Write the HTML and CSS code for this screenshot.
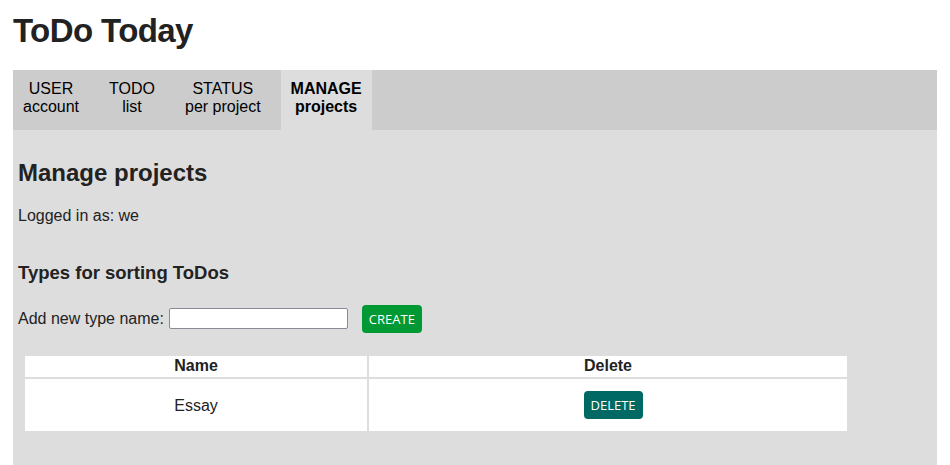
FILE: index.html
```html
<!DOCTYPE html>
<html lang="en">
<head>
<meta charset="utf-8">
<title>ToDo Today</title>
<link rel="stylesheet" href="styles.css">
</head>
<body>
<h1 class="site-title">ToDo Today</h1>
<nav class="tabs">
  <a class="tab" href="#">USER<br>account</a>
  <a class="tab" href="#">TODO<br>list</a>
  <a class="tab" href="#">STATUS<br>per project</a>
  <a class="tab tab-active" href="#">MANAGE<br>projects</a>
</nav>
<main class="panel">
  <h2 class="page-title">Manage projects</h2>
  <p class="login">Logged in as: we</p>
  <h3 class="section-title">Types for sorting ToDos</h3>
  <form class="add-form">
    <label class="add-label" for="typename">Add new type name:</label>
    <input class="add-input" id="typename" type="text">
    <button class="btn btn-create" type="button">CREATE</button>
  </form>
  <table class="types">
    <thead>
      <tr><th class="col-name">Name</th><th class="col-delete">Delete</th></tr>
    </thead>
    <tbody>
      <tr><td class="cell-name">Essay</td><td><button class="btn btn-delete" type="button">DELETE</button></td></tr>
    </tbody>
  </table>
</main>
</body>
</html>
```

FILE: styles.css
```css
html, body {
  margin: 0;
  padding: 0;
  background: #fff;
}
body {
  padding: 0 13px;
  font-family: "Liberation Sans", Arial, sans-serif;
  font-size: 16px;
  color: #222;
}
.site-title {
  font-size: 33px;
  font-weight: bold;
  letter-spacing: -0.6px;
  margin: 11px 0 20px 0;
  line-height: 39px;
  color: #222;
}
.tabs {
  display: flex;
  gap: 10px;
  background: #ccc;
  height: 60px;
}
.tab {
  display: block;
  padding: 10px 10px 0 10px;
  text-align: center;
  color: #000;
  text-decoration: none;
  line-height: 18.4px;
}
.tab-active {
  background: #ddd;
  font-weight: bold;
}
.panel {
  background: #ddd;
  padding: 9px 5px 40px 5px;
}
.page-title {
  font-size: 24px;
  margin: 20px 0 20px 0;
  line-height: 27.6px;
}
.login {
  margin: 0;
  line-height: 18.4px;
}
.section-title {
  font-size: 18.5px;
  margin: 37px 0 21px 0;
  line-height: 21.5px;
}
.add-form {
  display: flex;
  align-items: center;
  height: 28px;
  margin: 0;
}
.add-label {
  margin-right: 5px;
}
.add-input {
  width: 179px;
  height: 21px;
  box-sizing: border-box;
  border: 1px solid #8a8a96;
  border-radius: 2px;
  background: #fff;
  padding: 1px 2px;
  margin: 0;
}
.btn {
  font-family: "Open Sans", "Noto Sans", sans-serif;
  font-size: 13px;
  color: #fff;
  border: none;
  border-radius: 4px;
  height: 28px;
  padding: 0 6px;
  margin: 0 0 0 10px;
  cursor: pointer;
}
.add-form .btn-create {
  margin-left: 14px;
}
.btn-create {
  background: #009933;
  width: 60px;
}
.btn-delete {
  background: #006963;
  width: 59px;
}
.types {
  margin: 21px 0 0 5px;
  border-spacing: 2px;
  width: 826px;
}
.types th, .types td {
  background: #fff;
  text-align: center;
  padding: 1px;
  line-height: 18.4px;
}
.types th {
  font-weight: bold;
  height: 19px;
}
.types td {
  height: 49px;
  vertical-align: middle;
}
.types .cell-name {
  padding: 3px 1px 0 1px;
}
.col-name {
  width: 340px;
}
```
